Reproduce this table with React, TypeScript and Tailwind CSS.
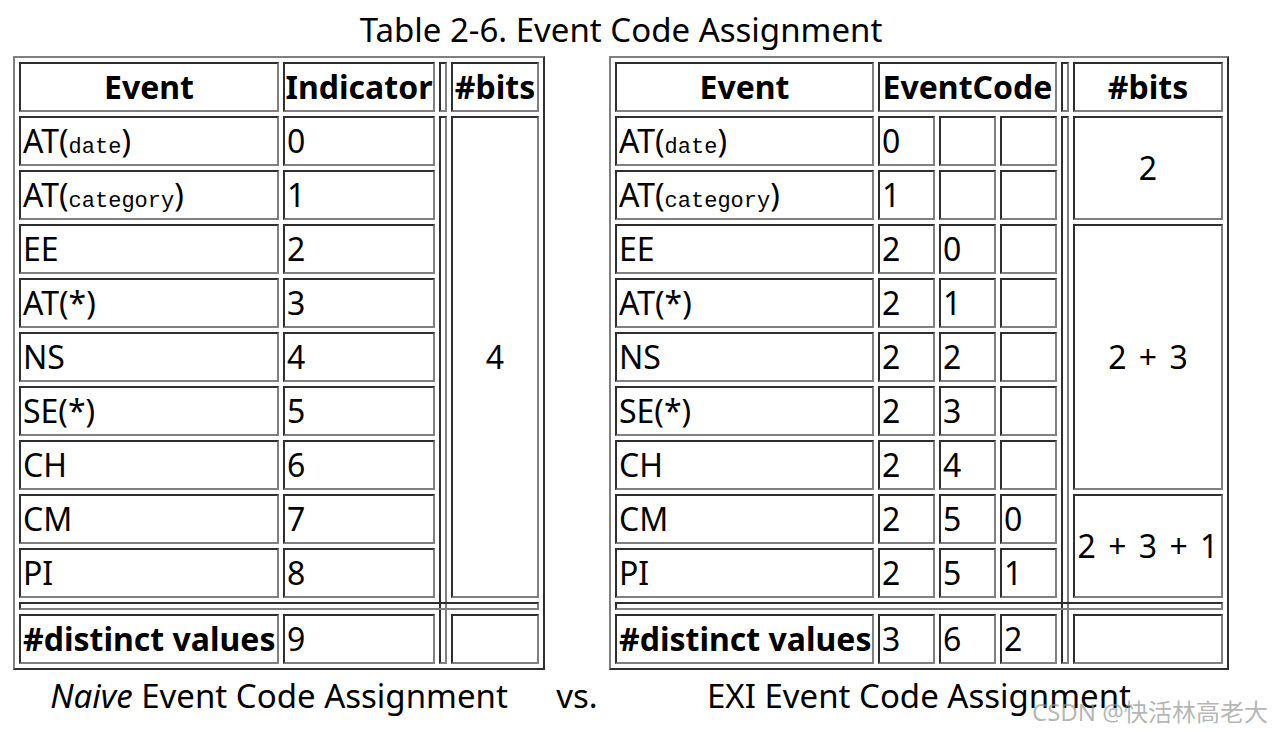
import React from "react";

const FONT = "font-['Noto_Sans','Noto_Sans_CJK_SC',sans-serif]";
const CELL =
  "border-2 border-t-[#2e2e2e] border-l-[#2e2e2e] border-r-[#808080] border-b-[#808080] flex items-center px-[2px] text-[32px] text-black whitespace-nowrap overflow-visible";
const OUTER =
  "border-2 border-t-[#808080] border-l-[#808080] border-r-[#2e2e2e] border-b-[#2e2e2e] p-[4px]";

function Mono({ children }: { children: React.ReactNode }) {
  return (
    <span className="font-['Liberation_Mono',monospace] text-[22px]">
      {children}
    </span>
  );
}

type Ev = { name: React.ReactNode; key: string };

const events: Ev[] = [
  { key: "date", name: <span>AT(<Mono>date</Mono>)</span> },
  { key: "cat", name: <span>AT(<Mono>category</Mono>)</span> },
  { key: "ee", name: <span>EE</span> },
  { key: "at", name: <span>AT(*)</span> },
  { key: "ns", name: <span>NS</span> },
  { key: "se", name: <span>SE(*)</span> },
  { key: "ch", name: <span>CH</span> },
  { key: "cm", name: <span>CM</span> },
  { key: "pi", name: <span>PI</span> },
];

const exiCodes: [string, string, string][] = [
  ["0", "", ""],
  ["1", "", ""],
  ["2", "0", ""],
  ["2", "1", ""],
  ["2", "2", ""],
  ["2", "3", ""],
  ["2", "4", ""],
  ["2", "5", "0"],
  ["2", "5", "1"],
];

function NaiveTable() {
  return (
    <div className={OUTER}>
      <div className="grid grid-cols-[260px_152px_8px_88px] grid-rows-[repeat(10,50px)_8px_50px] gap-[4px]">
        <div className={`${CELL} justify-center font-bold`}>Event</div>
        <div className={`${CELL} justify-center font-bold`}>Indicator</div>
        <div className={CELL}></div>
        <div className={`${CELL} justify-center font-bold`}>#bits</div>
        <div className={`${CELL} col-start-3 row-start-2 row-span-11`}></div>
        <div className={`${CELL} col-start-1 col-span-4 row-start-11`}></div>
        {events.map((e, i) => (
          <React.Fragment key={e.key}>
            <div className={`${CELL} col-start-1`}>{e.name}</div>
            <div className={`${CELL} col-start-2`}>{i}</div>
            {i === 0 && (
              <div className={`${CELL} col-start-4 row-span-9 justify-center`}>4</div>
            )}
          </React.Fragment>
        ))}
        <div className={`${CELL} col-start-1 row-start-12 font-bold`}>#distinct values</div>
        <div className={`${CELL} col-start-2 row-start-12`}>9</div>
        <div className={`${CELL} col-start-4 row-start-12`}></div>
      </div>
    </div>
  );
}

function ExiTable() {
  return (
    <div className={OUTER}>
      <div className="grid grid-cols-[259px_57px_57px_57px_8px_150px] grid-rows-[repeat(10,50px)_8px_50px] gap-[4px]">
        <div className={`${CELL} justify-center font-bold`}>Event</div>
        <div className={`${CELL} col-span-3 justify-center font-bold`}>EventCode</div>
        <div className={CELL}></div>
        <div className={`${CELL} justify-center font-bold`}>#bits</div>
        <div className={`${CELL} col-start-5 row-start-2 row-span-11`}></div>
        <div className={`${CELL} col-start-1 col-span-6 row-start-11`}></div>
        {events.map((e, i) => (
          <React.Fragment key={e.key}>
            <div className={`${CELL} col-start-1`}>{e.name}</div>
            <div className={`${CELL} col-start-2`}>{exiCodes[i][0]}</div>
            <div className={`${CELL} col-start-3`}>{exiCodes[i][1]}</div>
            <div className={`${CELL} col-start-4`}>{exiCodes[i][2]}</div>
            {i === 0 && (
              <div className={`${CELL} col-start-6 row-span-2 justify-center`}>2</div>
            )}
            {i === 2 && (
              <div className={`${CELL} col-start-6 row-span-5 justify-center [word-spacing:4px]`}>
                2 + 3
              </div>
            )}
            {i === 7 && (
              <div className={`${CELL} col-start-6 row-span-2 justify-center [word-spacing:4px]`}>
                2 + 3 + 1
              </div>
            )}
          </React.Fragment>
        ))}
        <div className={`${CELL} col-start-1 row-start-12 font-bold`}>#distinct values</div>
        <div className={`${CELL} col-start-2 row-start-12`}>3</div>
        <div className={`${CELL} col-start-3 row-start-12`}>6</div>
        <div className={`${CELL} col-start-4 row-start-12`}>2</div>
        <div className={`${CELL} col-start-6 row-start-12`}></div>
      </div>
    </div>
  );
}

export default function App() {
  return (
    <div className={`relative w-[1274px] h-[733px] bg-white text-black overflow-hidden ${FONT}`}>
      <div className="pl-[13px] pt-[8px] w-[1229px]">
        <div className="h-[44px] leading-[44px] text-[33px] text-center mb-[4px]">
          Table 2-6. Event Code Assignment
        </div>
        <div className="flex items-start gap-[64px]">
          <NaiveTable />
          <ExiTable />
        </div>
        <div className="flex h-[52px] leading-[52px] text-[33px]">
          <div className="w-[532px] text-center">
            <i>Naive</i> Event Code Assignment
          </div>
          <div className="w-[64px] text-center">vs.</div>
          <div className="w-[620px] text-center">EXI Event Code Assignment</div>
        </div>
      </div>
      <div className="absolute left-[1032px] top-[696px] text-[24px] leading-[32px] text-[rgba(150,150,150,0.7)] whitespace-nowrap">
        CSDN @快活林高老大
      </div>
    </div>
  );
}
